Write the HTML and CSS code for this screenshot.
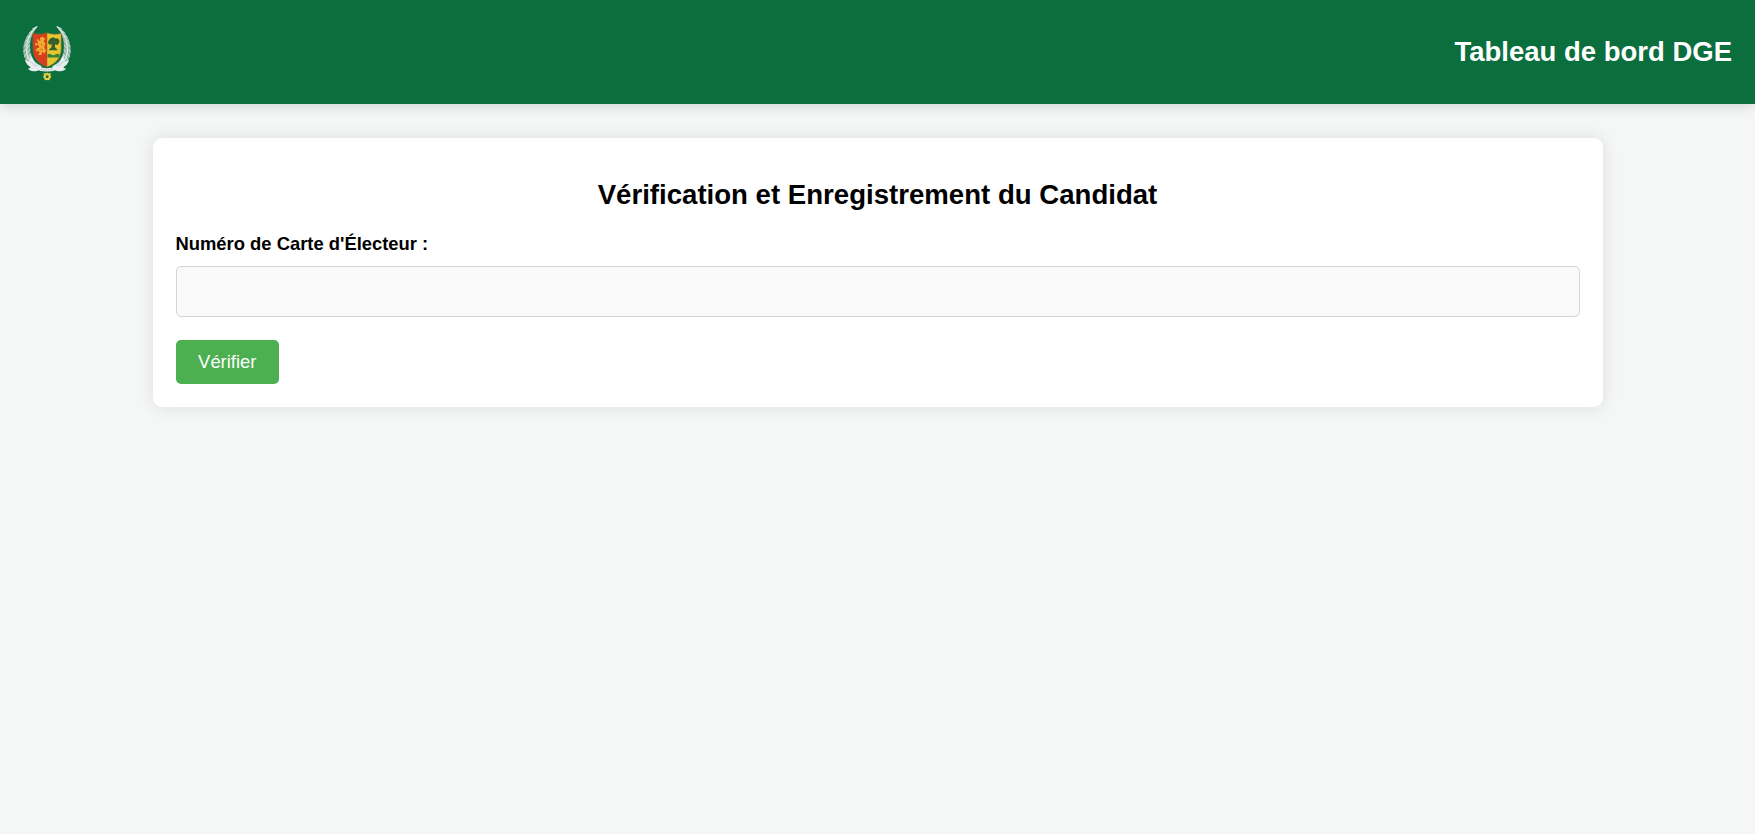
FILE: index.html
```html
<!DOCTYPE html>
<html lang="fr">
<head>
<meta charset="utf-8">
<title>Tableau de bord DGE</title>
<link rel="stylesheet" href="styles.css">
</head>
<body>
<header class="header">
  <svg class="emblem" viewBox="38 39 147 177" role="img" aria-label="Armoiries">
    <!-- palm branches -->
    <g id="palm">
      <path d="M79 46C56 59 38 87 39 120C39 146 53 168 84 178L96 172C72 163 60 140 60 115C58 90 65 67 83 46Z" fill="#8fb5a3"/>
      <path d="M81 46C61 64 47 90 49 121C50 145 61 162 88 174" fill="none" stroke="#dce7e4" stroke-width="4"/>
      <path d="M80 47L66 54M75 55L57 66M68 66L49 80M62 77L44 94M59 90L40 109M59 103L39 124M60 117L42 139M62 130L46 152M67 142L52 163M73 152L60 174" stroke="#d3e2dc" stroke-width="3" fill="none"/>
      <path d="M62 128C64 145 77 160 95 167L91 179C74 186 60 185 53 176L64 173C52 166 47 158 44 149L58 154Z" fill="#e8eef0"/>
      <path d="M60 153L78 169M70 151L84 168" stroke="#a3b9b5" stroke-width="2"/>
    </g>
    <use href="#palm" transform="matrix(-1 0 0 1 223 0)"/>
    <!-- shield -->
    <path d="M68 68Q90 73 112 66V170C88 161 69 145 69 116Z" fill="#d93d20"/>
    <path d="M112 66Q134 73 155 68V116C154 145 137 161 112 170Z" fill="#e5c62f"/>
    <path d="M68 68Q90 73 112 66Q134 73 155 68V116C154 145 137 161 112 170C87 161 69 145 69 116Z" fill="none" stroke="#8a652c" stroke-width="2"/>
    <!-- lion -->
    <path d="M90 81L98 78L106 84L101 91L107 99L103 110L109 121L103 129L97 124L94 134H83L89 128L86 120L80 124L77 116L88 110L84 103L76 105L75 98L84 96L79 89L83 84L91 92Z" fill="#efac2d"/>
    <path d="M80 82L83 102M93 99L98 105M91 115L99 118" stroke="#df5a21" stroke-width="3"/>
    <!-- baobab and river -->
    <path d="M115 92L121 83L130 79L138 83L145 82L150 91L148 98L143 103L136 101L136 110L145 119H116L125 110L126 101L119 102L115 97Z" fill="#35602c"/>
    <path d="M122 91L129 95M135 95L141 91" stroke="#526d2b" stroke-width="2" fill="none"/>
    <path d="M113 132Q119 127 125 132T137 132T151 132L148 141H113Z" fill="#368238"/>
    <!-- ribbon and star -->
    <path d="M85 169Q112 180 138 169L134 182Q112 186 89 182Z" fill="#edf0f2"/>
    <path d="M93 177Q112 182 130 177" stroke="#909d9d" stroke-width="3" stroke-dasharray="4 3" fill="none"/>
    <path d="M112 187L116 190L123 189L122 197L125 201L121 205L119 211L112 210L105 211L103 205L99 201L102 197L101 189L108 190Z" fill="#e5ce45"/>
    <circle cx="112" cy="200" r="4.5" fill="#236d2b"/>
  </svg>
  <div class="header-title">Tableau de bord DGE</div>
</header>
<main class="card">
  <h2 class="card-title">Vérification et Enregistrement du Candidat</h2>
  <form class="form">
    <label class="label" for="carte">Numéro de Carte d'Électeur :</label>
    <input class="input" id="carte" type="text">
    <button class="button" type="button">Vérifier</button>
  </form>
</main>
</body>
</html>
```
FILE: styles.css
```css
* { box-sizing: border-box; }
body {
  margin: 0;
  min-height: 100vh;
  background: #f4f7f6;
  color: #000;
  font-family: "Liberation Sans", Arial, sans-serif;
}
.header {
  display: flex;
  align-items: center;
  justify-content: space-between;
  height: 104px;
  padding: 0 23px;
  background: #0b6e3d;
  box-shadow: 0 2px 12px rgba(0, 0, 0, .15);
}
.emblem {
  width: 48px;
  height: 58px;
  margin-top: 2px;
}
.header-title {
  padding-bottom: 1px;
  color: #fff;
  font-size: 27.5px;
  font-weight: bold;
  line-height: 32px;
}
.card {
  width: 1450px;
  height: 269px;
  margin: 34px auto 0;
  padding: 41px 23px 23px;
  background: #fff;
  border-radius: 9px;
  box-shadow: 0 0 17px rgba(0, 0, 0, .1);
}
.card-title {
  margin: 0;
  text-align: center;
  font-size: 27.6px;
  line-height: 32px;
}
.form {
  display: flex;
  flex-direction: column;
  align-items: flex-start;
  padding-top: 22px;
}
.label {
  font-size: 18.4px;
  font-weight: bold;
  line-height: 22px;
}
.input {
  width: 100%;
  height: 51px;
  margin: 11px 0 23px;
  padding: 0 14px;
  border: 1px solid #d4d4d4;
  border-radius: 5px;
  background: #f9f9f9;
  font: 18.4px "Liberation Sans", Arial, sans-serif;
}
.button {
  width: 103.5px;
  height: 44px;
  padding: 0 0 1px;
  border: 0;
  border-radius: 5px;
  background: #4caf50;
  color: #fff;
  font: 18.4px/43px "Liberation Sans", Arial, sans-serif;
}
```
